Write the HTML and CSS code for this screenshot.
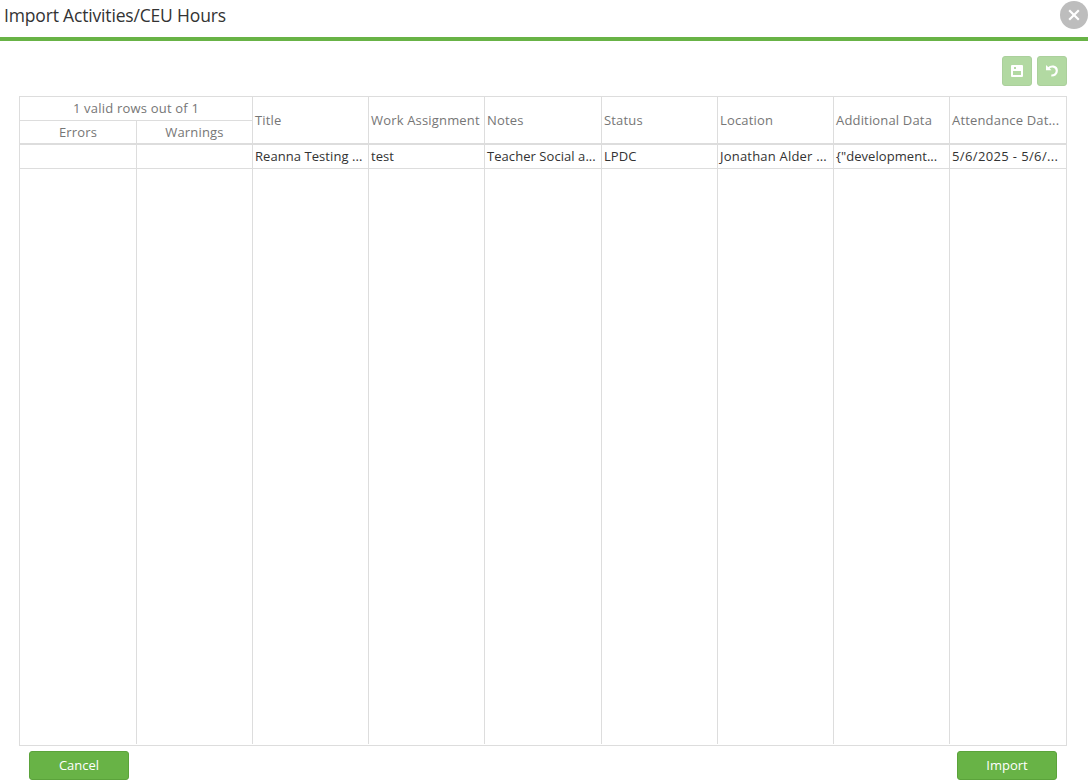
FILE: index.html
```
<!DOCTYPE html>
<html lang="en">
<head>
    <meta charset="UTF-8">
    <meta name="viewport" content="width=device-width, initial-scale=1.0">
    <title>Import Activities/CEU Hours</title>
    <link rel="stylesheet" href="styles.css">
</head>
<body>
    <header class="dialog-header">
        <h1>Import Activities/CEU Hours</h1>
        <button type="button" class="close" aria-label="Close">
            <svg width="28" height="28" viewBox="0 0 28 28">
                <circle cx="14" cy="14" r="14" fill="#bdbdbd"/>
                <path d="M9.2 9.2l9.600 9.600M18.800 9.200l-9.600 9.600" stroke="#fff" stroke-width="2.2"/>
            </svg>
        </button>
    </header>

    <div class="toolbar">
        <button type="button" class="tool" aria-label="Save" disabled>
            <svg width="12" height="12" viewBox="0 0 12 12">
                <path fill="#fff" fill-rule="evenodd" d="M1 0h10a1 1 0 0 1 1 1v10a1 1 0 0 1-1 1H1a1 1 0 0 1-1-1V1a1 1 0 0 1 1-1zM3 2v2h2V2zM2 6v4h8V6z"/>
            </svg>
        </button>
        <button type="button" class="tool" aria-label="Undo" disabled>
            <svg width="12" height="12" viewBox="0 0 12 12">
                <path d="M2.500 3.200C5 .6 10.800 .8 10.800 5.800C10.800 9 8.300 10.600 5.300 10.500" fill="none" stroke="#fff" stroke-width="2.2"/>
                <path d="M0 0V5.200H5.500z" fill="#fff"/>
            </svg>
        </button>
    </div>

    <div class="grid">
        <div class="head summary">1 valid rows out of 1</div>
        <div class="head sub">Errors</div>
        <div class="head sub">Warnings</div>
        <div class="head tall">Title</div>
        <div class="head tall">Work Assignment</div>
        <div class="head tall">Notes</div>
        <div class="head tall">Status</div>
        <div class="head tall">Location</div>
        <div class="head tall">Additional Data</div>
        <div class="head tall">Attendance Dat...</div>

        <div class="cell"></div>
        <div class="cell"></div>
        <div class="cell">Reanna Testing ...</div>
        <div class="cell">test</div>
        <div class="cell">Teacher Social a...</div>
        <div class="cell">LPDC</div>
        <div class="cell wide">Jonathan Alder ...</div>
        <div class="cell">{"development...</div>
        <div class="cell dates">5/6/2025 - 5/6/...</div>

        <div class="filler"></div>
        <div class="filler"></div>
        <div class="filler"></div>
        <div class="filler"></div>
        <div class="filler"></div>
        <div class="filler"></div>
        <div class="filler"></div>
        <div class="filler"></div>
        <div class="filler"></div>
    </div>

    <footer class="actions">
        <button type="button" class="btn">Cancel</button>
        <button type="button" class="btn">Import</button>
    </footer>
</body>
</html>
```
FILE: styles.css
```
* {
    margin: 0;
    padding: 0;
    box-sizing: border-box;
}

body {
    height: 784px;
    overflow: hidden;
    background: #fff;
    font-family: "Segoe UI", "Open Sans", sans-serif;
    font-size: 13px;
    color: #333;
}

button {
    border: none;
    font-family: inherit;
}

.dialog-header {
    height: 41px;
    padding: 1px 0 0 4px;
    display: flex;
    justify-content: space-between;
    align-items: flex-start;
    border-bottom: 4px solid #68b346;
}

h1 {
    font-size: 17.5px;
    font-weight: 400;
    line-height: 28px;
    letter-spacing: -0.17px;
}

.close {
    width: 28px;
    height: 28px;
    background: none;
}

svg {
    display: block;
}

.toolbar {
    display: flex;
    justify-content: flex-end;
    gap: 5px;
    padding: 15px 21px 10px 0;
}

.tool {
    width: 30px;
    height: 30px;
    display: flex;
    justify-content: center;
    align-items: center;
    background: #b2d9a2;
    border: 1px solid #abd09c;
    border-radius: 3px;
}

.grid {
    width: 1048px;
    height: 650px;
    margin-left: 19px;
    padding-bottom: 1px;
    display: grid;
    grid-template-columns: 117px 116px 116px 116px 117px 116px 116px 116px 116px;
    grid-template-rows: 24px 24px 24px 1fr;
    border: 1px solid #ddd;
}

.head,
.cell {
    padding-left: 2px;
    white-space: nowrap;
    overflow: hidden;
    border-right: 1px solid #ddd;
}

.head {
    color: #767676;
    line-height: 23px;
    letter-spacing: 0.17px;
}

.summary {
    grid-column: 1 / 3;
    grid-row: 1;
    padding-left: 0;
    text-align: center;
    letter-spacing: 0.2px;
    border-bottom: 1px solid #ddd;
}

.sub {
    grid-row: 2;
    padding-left: 0;
    text-align: center;
    border-bottom: 2px solid #ddd;
}

.tall {
    grid-row: 1 / 3;
    line-height: 47px;
    border-bottom: 2px solid #ddd;
}

.cell {
    line-height: 23px;
    letter-spacing: 0.06px;
    border-bottom: 1px solid #ddd;
}

.wide {
    letter-spacing: 0.2px;
}

.dates {
    letter-spacing: 0.37px;
}

.filler {
    border-right: 1px solid #ddd;
}

.tall:nth-child(10),
.cell:nth-child(19),
.filler:last-child {
    border-right: none;
}

.actions {
    display: flex;
    justify-content: space-between;
    padding: 5px 31px 0 29px;
}

.btn {
    width: 100px;
    height: 29px;
    padding-bottom: 2px;
    background: #68b346;
    border: 1px solid #5ba33b;
    border-radius: 3px;
    color: #fff;
    font-size: 13px;
    font-weight: 500;
}
```
